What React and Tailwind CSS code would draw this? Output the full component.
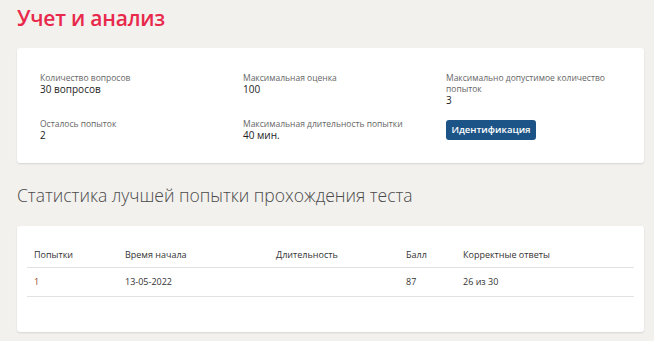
export default function App() {
  return (
    <div className="min-h-[341px] w-[654px] bg-[#f2f1ee] px-[17px] pt-[6px] pb-[9px] font-['Open_Sans',sans-serif] text-[#333]">
      <h1 className="text-[21px] leading-[24px] font-semibold text-[#e8294b] tracking-[-0.2px]">Учет и анализ</h1>

      <div className="mt-[18px] h-[115px] w-[627px] rounded-[3px] bg-white shadow-[0_1px_2px_rgba(0,0,0,0.12)] pl-[23px] pt-[24px]">
        <div className="grid grid-cols-[203px_203px_180px] gap-y-[12px]">
          <InfoItem label="Количество вопросов" value="30 вопросов" />
          <InfoItem label="Максимальная оценка" value="100" />
          <InfoItem label="Максимально допустимое количество попыток" value="3" />
          <InfoItem label="Осталось попыток" value="2" />
          <InfoItem label="Максимальная длительность попытки" value="40 мин." />
          <div className="-mt-[3px]">
            <button className="h-[20px] w-[90px] rounded-[3px] bg-[#1c5488] text-[9.5px] font-semibold text-white">
              Идентификация
            </button>
          </div>
        </div>
      </div>

      <h2 className="mt-[20px] text-[17.5px] leading-[24px] font-light text-[#4a4a4a]">
        Статистика лучшей попытки прохождения теста
      </h2>

      <div className="mt-[19px] h-[106px] w-[627px] rounded-[3px] bg-white shadow-[0_1px_2px_rgba(0,0,0,0.12)] px-[10px] pt-[16px]">
        <table className="w-[607px] text-left text-[9px] text-[#333]">
          <thead>
            <tr className="border-b border-[#e2e2e2]">
              <th className="h-[25px] w-[98px] pl-[7px] font-medium">Попытки</th>
              <th className="w-[151px] font-medium">Время начала</th>
              <th className="w-[130px] font-medium">Длительность</th>
              <th className="w-[57px] font-medium">Балл</th>
              <th className="font-medium">Корректные ответы</th>
            </tr>
          </thead>
          <tbody>
            <tr className="border-b border-[#e2e2e2]">
              <td className="h-[29px] pl-[7px] text-[#8a4a2f]">1</td>
              <td>13-05-2022</td>
              <td></td>
              <td>87</td>
              <td>26 из 30</td>
            </tr>
          </tbody>
        </table>
      </div>
    </div>
  );
}

function InfoItem({ label, value }) {
  return (
    <div>
      <div className="text-[8.5px] leading-[11px] text-[#666]">{label}</div>
      <div className="text-[10px] leading-[12px] font-medium text-[#222]">{value}</div>
    </div>
  );
}
